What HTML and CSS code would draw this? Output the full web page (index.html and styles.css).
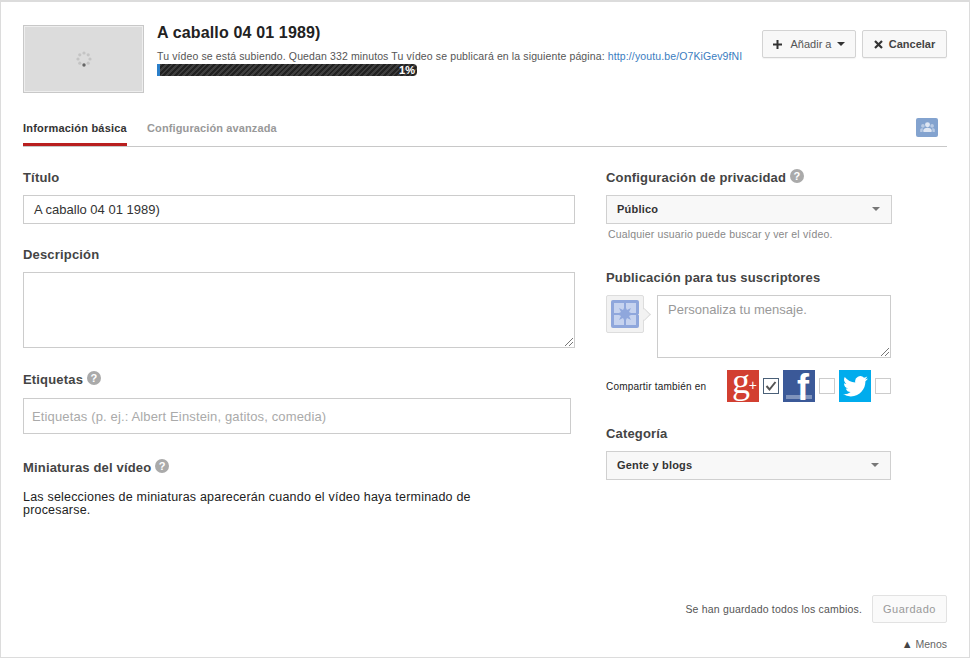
FILE: index.html
```html
<!DOCTYPE html>
<html lang="es">
<head>
<meta charset="utf-8">
<title>A caballo 04 01 1989)</title>
<link rel="stylesheet" href="styles.css">
</head>
<body>
<div class="frame">
  <header class="head">
    <div class="thumb">
      <svg width="16" height="16" viewBox="0 0 16 16"><g fill="#c4c4c4"><circle cx="8" cy="2" r="1.6"/><circle cx="12.2" cy="3.8" r="1.6"/><circle cx="14" cy="8" r="1.6"/><circle cx="12.2" cy="12.2" r="1.6"/><circle cx="3.8" cy="12.2" r="1.6"/><circle cx="2" cy="8" r="1.6"/><circle cx="3.8" cy="3.8" r="1.6"/></g><circle cx="8" cy="14" r="1.7" fill="#666"/></svg>
    </div>
    <div class="upload">
      <h1 class="video-title">A caballo 04 01 1989)</h1>
      <p class="status">Tu vídeo se está subiendo. Quedan 332 minutos Tu vídeo se publicará en la siguiente página: <a class="link" href="#">http://youtu.be/O7KiGev9fNI</a></p>
      <div class="progress"><span class="progress-fill"></span><span class="progress-label">1%</span></div>
    </div>
    <div class="actions">
      <button class="btn btn-add"><svg width="9" height="9" viewBox="0 0 9 9"><path d="M3.5 0h2v3.5H9v2H5.5V9h-2V5.5H0v-2h3.5z" fill="#333"/></svg><span class="add-text">Añadir a</span><i class="caret caret-dark"></i></button>
      <button class="btn btn-cancel"><svg width="9" height="9" viewBox="0 0 9 9"><path d="M1 1l7 7M8 1L1 8" stroke="#333" stroke-width="2.2"/></svg><span>Cancelar</span></button>
    </div>
  </header>

  <nav class="tabs">
    <a class="tab tab-active" href="#">Información básica</a>
    <a class="tab tab-other" href="#">Configuración avanzada</a>
    <span class="people"><svg width="15" height="11" viewBox="0 0 16 12"><g fill="#dfe7f3"><circle cx="8" cy="3" r="2.7"/><path d="M3.5 11V9c0-1.6 2-2.6 4.5-2.6s4.500 1 4.500 2.600v2z"/></g><g fill="#b9cbe4"><circle cx="3" cy="4.300" r="2"/><circle cx="13" cy="4.300" r="2"/><path d="M0 11V8.500C0 7.300 1.300 6.800 3 6.800L2.500 11zM16 11V8.500c0-1.200-1.300-1.700-3-1.700l.5 4.200z"/></g></svg></span>
  </nav>

  <main class="columns">
    <section class="left">
      <label class="label label-title">Título</label>
      <div class="field field-title">A caballo 04 01 1989)</div>
      <label class="label label-desc">Descripción</label>
      <div class="field field-desc"><svg class="grip" width="9" height="9" viewBox="0 0 9 9"><path d="M1 9l8-8M5 9l4-4" stroke="#777" fill="none"/></svg></div>
      <label class="label label-tags">Etiquetas <i class="help">?</i></label>
      <div class="field field-tags">Etiquetas (p. ej.: Albert Einstein, gatitos, comedia)</div>
      <label class="label label-thumbs">Miniaturas del vídeo <i class="help">?</i></label>
      <p class="thumbs-note">Las selecciones de miniaturas aparecerán cuando el vídeo haya terminado de procesarse.</p>
    </section>

    <aside class="right">
      <label class="label">Configuración de privacidad <i class="help">?</i></label>
      <div class="select select-privacy"><span>Público</span><i class="caret"></i></div>
      <p class="hint">Cualquier usuario puede buscar y ver el vídeo.</p>

      <label class="label label-pub">Publicación para tus suscriptores</label>
      <div class="compose">
        <div class="avatar">
          <svg width="28" height="28" viewBox="0 0 28 28"><rect width="28" height="28" rx="2" fill="#8fa7dc"/><g fill="#c6d3ef"><rect x="3" y="3" width="10" height="10"/><rect x="15" y="3" width="10" height="10"/><rect x="3" y="15" width="10" height="10"/><rect x="15" y="15" width="10" height="10"/></g><path d="M14 6l2 4 4-2-2 4 4 2-4 2 2 4-4-2-2 4-2-4-4 2 2-4-4-2 4-2-2-4 4 2z" fill="#8fa7dc"/></svg>
        </div>
        <div class="field field-msg">Personaliza tu mensaje.<svg class="grip" width="9" height="9" viewBox="0 0 9 9"><path d="M1 9l8-8M5 9l4-4" stroke="#777" fill="none"/></svg></div>
      </div>
      <div class="share">
        <span class="share-label">Compartir también en</span>
        <span class="social social-g"><span class="g-letter">g</span><b>+</b></span>
        <span class="check check-on"><svg width="14" height="14" viewBox="0 0 14 14"><path d="M2.500 7l3 3.500L11.500 3" stroke="#555" stroke-width="2" fill="none"/></svg></span>
        <span class="social social-f"><span class="f-letter">f</span></span>
        <span class="check"></span>
        <span class="social social-t"><svg width="25" height="21" viewBox="0 0 24 20"><path d="M24 2.400a9.800 9.800 0 0 1-2.800.8A4.900 4.900 0 0 0 23.300.5a9.800 9.800 0 0 1-3.100 1.200A4.900 4.900 0 0 0 11.800 6.100 14 14 0 0 1 1.700.9a4.900 4.900 0 0 0 1.500 6.600 4.900 4.900 0 0 1-2.200-.6v.1a4.900 4.900 0 0 0 3.900 4.800 4.900 4.900 0 0 1-2.200.1 4.900 4.900 0 0 0 4.600 3.400A9.900 9.900 0 0 1 0 17.300 14 14 0 0 0 7.500 19.500c9.100 0 14-7.500 14-14v-.6A10 10 0 0 0 24 2.400z" fill="#fff"/></svg></span>
        <span class="check"></span>
      </div>

      <label class="label label-cat">Categoría</label>
      <div class="select select-cat"><span>Gente y blogs</span><i class="caret"></i></div>
    </aside>
  </main>

  <footer class="foot">
    <div class="save-row">
      <span class="saved">Se han guardado todos los cambios.</span>
      <button class="btn btn-saved">Guardado</button>
    </div>
    <a class="less" href="#"><span class="less-arrow">▲</span> Menos</a>
  </footer>
</div>
</body>
</html>
```

FILE: styles.css
```css
* { box-sizing: border-box; }
html, body { margin: 0; padding: 0; background: #fff; }
body { font-family: "Liberation Sans", Arial, sans-serif; color: #333; }
.frame {
  width: 970px; height: 658px;
  border: 1px solid #dcdcdc; border-top: 2px solid #dcdcdc;
  padding: 23px 22px 0 22px;
  display: flex; flex-direction: column;
}
.head { display: flex; align-items: flex-start; height: 67px; }
.thumb {
  width: 121px; height: 68px; flex: none;
  background: #dcdcdc; border: 1px solid #c8c8c8;
  display: flex; align-items: center; justify-content: center;
  box-shadow: 0 0 0 1px #eee inset;
}
.upload { margin-left: 13px; width: 586px; flex: none; }
.video-title { margin: 0; font-size: 16px; line-height: 16px; color: #222; font-weight: bold; letter-spacing: .15px; }
.status { margin: 9px 0 0; font-size: 10.500px; line-height: 12px; color: #555; white-space: nowrap; letter-spacing: .12px; }
.link { color: #3a7cc0; text-decoration: none; }
.progress {
  position: relative; margin-top: 2px; width: 260px; height: 12px;
  border-radius: 0 4px 4px 0; overflow: hidden;
  background: repeating-linear-gradient(135deg, #222 0 2px, #3f3f3f 2px 4px);
}
.progress-fill { position: absolute; left: 0; top: 0; bottom: 0; width: 3px; background: #2b7fc9; }
.progress-label { position: absolute; right: 2px; top: 0; font-size: 11px; line-height: 12px; font-weight: bold; color: #fff; }
.actions { margin-left: 19px; margin-top: 5px; display: flex; gap: 6px; }
.btn {
  height: 28px; padding: 0; font: inherit; font-size: 11px; color: #333;
  border: 1px solid #d3d3d3; border-radius: 2px; background: #f8f8f8;
  display: flex; align-items: center; justify-content: center;
  box-shadow: 0 1px 1px rgba(0,0,0,.05);
}
.btn-add { width: 94px; gap: 6px; color: #555; }
.add-text { margin-left: 3px; }
.btn-cancel { width: 85px; gap: 6px; }
.btn-cancel span { font-weight: bold; color: #444; }
.caret { display: block; width: 0; height: 0; border: 4px solid transparent; border-top-color: #777; border-bottom: 0; }
.caret-dark { border-top-color: #333; }

.tabs {
  position: relative; margin-top: 26px; height: 29px; width: 924px;
  border-bottom: 1px solid #c8c8c8; display: flex; align-items: flex-start;
}
.tab { font-size: 11px; font-weight: bold; color: #999; text-decoration: none; line-height: 13px; height: 28px; padding-top: 4px; letter-spacing: .12px; }
.tab-active { width: 104px; color: #333; border-bottom: 3px solid #b91f1f; letter-spacing: .2px; white-space: nowrap; }
.tab-other { margin-left: 20px; }
.people {
  position: absolute; right: 9px; top: 0; width: 22px; height: 19px; border-radius: 2px;
  background: #83a3cf; display: flex; align-items: center; justify-content: center;
}

.columns { display: flex; }
.left { width: 552px; flex: none; }
.right { width: 286px; flex: none; margin-left: 31px; }
.label { display: block; font-size: 13px; line-height: 16px; font-weight: bold; color: #444; letter-spacing: .17px; }
.left .label-title { margin-top: 23px; }
.right > .label:first-child { margin-top: 22px; }
.field { position: relative; border: 1px solid #ccc; background: #fff; font-size: 13px; }
.field-title { margin-top: 9px; height: 29px; padding-left: 10px; line-height: 27px; color: #333; }
.label-desc { margin-top: 23px; }
.field-desc { margin-top: 9px; height: 76px; }
.label-tags { margin-top: 23px; }
.field-tags { margin-top: 10px; width: 548px; height: 36px; padding-left: 8px; line-height: 35px; color: #aaa; letter-spacing: .14px; }
.label-thumbs { margin-top: 25px; }
.thumbs-note { margin: 15px 0 0; width: 470px; font-size: 12.500px; line-height: 13px; color: #222; letter-spacing: .2px; }
.help {
  display: inline-block; width: 14px; height: 14px; border-radius: 50%; background: #aaa; color: #fff;
  font-style: normal; font-size: 11px; line-height: 14px; text-align: center; font-weight: bold; vertical-align: 2px; letter-spacing: 0;
}
.grip { position: absolute; right: 1px; bottom: 1px; }

.select {
  display: flex; align-items: center; justify-content: space-between;
  border: 1px solid #d0d0d0; background: #f8f8f8;
  height: 29px; padding: 0 11px 2px 10px; font-size: 11px; font-weight: bold; color: #333; letter-spacing: .2px;
}
.select-privacy { margin-top: 9px; }
.hint { margin: 4px 0 0 2px; font-size: 10.500px; line-height: 12px; color: #888; letter-spacing: .16px; }
.label-pub { margin-top: 30px; }
.compose { display: flex; margin-top: 9px; }
.avatar {
  position: relative; width: 38px; height: 38px; flex: none;
  border: 1px solid #ddd; border-radius: 2px; background: #f2f2f2;
  display: flex; align-items: center; justify-content: center;
}
.avatar::after {
  content: ""; position: absolute; right: -6px; top: 14px; width: 8px; height: 8px;
  background: #f2f2f2; transform: rotate(45deg); border-top: 1px solid #ddd; border-right: 1px solid #ddd;
}
.field-msg { margin-left: 13px; width: 234px; height: 63px; padding: 7px 10px; line-height: 14px; color: #999; }
.share { display: flex; align-items: center; margin-top: 12px; width: 286px; height: 32px; }
.share-label { width: 121px; flex: none; font-size: 10px; color: #222; letter-spacing: .2px; }
.social { width: 32px; height: 32px; flex: none; display: flex; align-items: center; justify-content: center; color: #fff; position: relative; }
.social-g { background: #d23f31; }
.g-letter { position: absolute; left: 5px; top: 0; font-family: "Liberation Serif", serif; font-size: 36px; line-height: 22px; }
.social-g b { position: absolute; right: 2px; top: 8px; font-size: 14px; line-height: 14px; font-weight: normal; }
.social-f { background: #3b5998; }
.f-letter { position: absolute; left: 14px; top: 4px; font-weight: bold; font-size: 36px; line-height: 28px; }
.social-f::after { content: ""; position: absolute; left: 3px; right: 3px; bottom: 3px; height: 4px; background: rgba(255,255,255,.35); }
.social-t { background: #00aced; }
.check { width: 16px; height: 16px; flex: none; margin: 0 4px; border: 1px solid #ccc; display: flex; align-items: center; justify-content: center; }
.check:last-child { margin-right: 0; }
.check-on { border-color: #4a6078; }
.label-cat { margin-top: 24px; }
.select-cat { margin-top: 9px; width: 285px; }

.foot { margin-top: auto; display: flex; flex-direction: column; align-items: flex-end; width: 924px; padding-bottom: 7px; }
.save-row { display: flex; align-items: center; gap: 10px; }
.saved { font-size: 10.500px; color: #555; letter-spacing: .18px; }
.btn-saved { width: 75px; background: #fafafa; color: #999; border-color: #e2e2e2; box-shadow: none; font-size: 11px; letter-spacing: .5px; }
.less { margin-top: 15px; font-size: 10.500px; line-height: 12px; color: #666; text-decoration: none; }
.less-arrow { font-size: 11px; color: #444; }
```
